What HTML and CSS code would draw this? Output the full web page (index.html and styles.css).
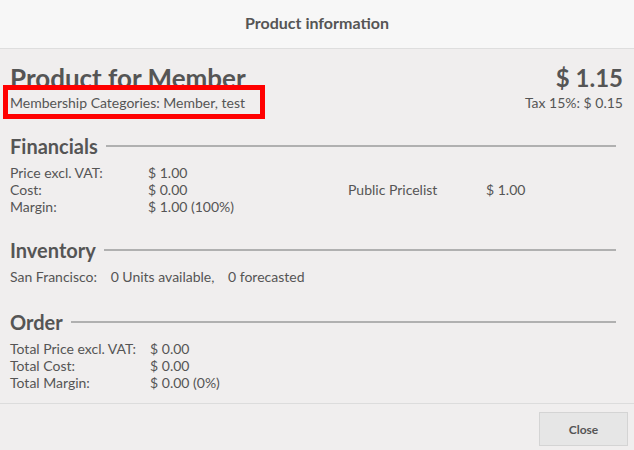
FILE: index.html
```html
<!DOCTYPE html>
<html>
<head>
<meta charset="utf-8">
<link rel="stylesheet" href="styles.css">
</head>
<body>
<div class="popup">
  <header class="title">Product information</header>
  <main class="body">
    <div class="product">
      <div class="product-left">
        <div class="name">Product for Member</div>
        <div class="sub">Membership Categories: Member, test</div>
        <div class="highlight"></div>
      </div>
      <div class="product-right">
        <div class="price">$ 1.15</div>
        <div class="sub">Tax 15%: $ 0.15</div>
      </div>
    </div>

    <section class="section sec-fin">
      <h2 class="sec-title">Financials</h2>
      <div class="fin">
        <div class="grid fin-left">
          <span>Price excl. VAT:</span><span>$ 1.00</span>
          <span>Cost:</span><span>$ 0.00</span>
          <span>Margin:</span><span>$ 1.00 (100%)</span>
        </div>
        <div class="grid fin-right">
          <span></span><span></span>
          <span>Public Pricelist</span><span>$ 1.00</span>
        </div>
      </div>
    </section>

    <section class="section sec-inv">
      <h2 class="sec-title">Inventory</h2>
      <div class="inv">
        <span class="inv-loc">San Francisco:</span>
        <span class="inv-av">0 Units available,</span>
        <span>0 forecasted</span>
      </div>
    </section>

    <section class="section sec-order">
      <h2 class="sec-title">Order</h2>
      <div class="grid order">
        <span>Total Price excl. VAT:</span><span>$ 0.00</span>
        <span>Total Cost:</span><span>$ 0.00</span>
        <span>Total Margin:</span><span>$ 0.00 (0%)</span>
      </div>
    </section>
  </main>
  <footer class="footer">
    <button class="btn">Close</button>
  </footer>
</div>
</body>
</html>
```

FILE: styles.css
```css
* { box-sizing: border-box; }
html, body { margin: 0; padding: 0; }
body {
  width: 634px;
  height: 450px;
  overflow: hidden;
  font-family: Lato, "Open Sans", sans-serif;
  color: #555555;
  background: #f0eeee;
}
.popup {
  display: flex;
  flex-direction: column;
  height: 450px;
}
.title {
  height: 49px;
  background: #f7f7f7;
  border-bottom: 1px solid #dedede;
  display: flex;
  align-items: center;
  justify-content: center;
  font-weight: bold;
  font-size: 16px;
  padding-bottom: 4px;
}
.body {
  flex: 1;
  padding: 14px 11px 0 10px;
}
.product {
  display: flex;
  justify-content: space-between;
  align-items: flex-start;
}
.product-left { position: relative; }
.name {
  font-size: 26px;
  font-weight: bold;
  line-height: 30px;
}
.price {
  font-size: 24px;
  font-weight: bold;
  line-height: 30px;
  text-align: right;
}
.product-right { text-align: right; }
.sub {
  font-size: 14px;
  line-height: 17px;
  margin-top: 1px;
}
.highlight {
  position: absolute;
  left: -7px;
  top: 22px;
  width: 262px;
  height: 34px;
  border: 5px solid #ff0000;
}
.sec-fin { margin-top: 24px; }
.sec-inv { margin-top: 24px; }
.sec-order { margin-top: 26px; }
.sec-title {
  margin: 0 0 7px 0;
  font-size: 20px;
  font-weight: bold;
  line-height: 22px;
  display: flex;
  align-items: center;
  padding-right: 7px;
}
.sec-title::after {
  content: "";
  flex: 1;
  height: 2px;
  background: #b0b0b0;
  margin-left: 8px;
}
.grid {
  display: grid;
  grid-template-columns: auto auto;
  justify-content: start;
  font-size: 14px;
  line-height: 17px;
}
.fin { display: flex; }
.fin-left { grid-template-columns: 138px auto; width: 338px; }
.fin-right { grid-template-columns: 138px auto; }
.order { column-gap: 14px; }
.inv {
  font-size: 14px;
  line-height: 17px;
}
.inv-loc { margin-right: 10px; }
.inv-av { margin-right: 10px; }
.footer {
  height: 47px;
  border-top: 1px solid #dcdcdc;
  display: flex;
  justify-content: flex-end;
  align-items: flex-start;
  padding: 8px 6px 0 0;
}
.btn {
  width: 89px;
  height: 34px;
  background: #e6e6e6;
  border: 1px solid #d4d4d4;
  font-family: Lato, sans-serif;
  font-weight: bold;
  font-size: 12px;
  color: #555555;
}
```
